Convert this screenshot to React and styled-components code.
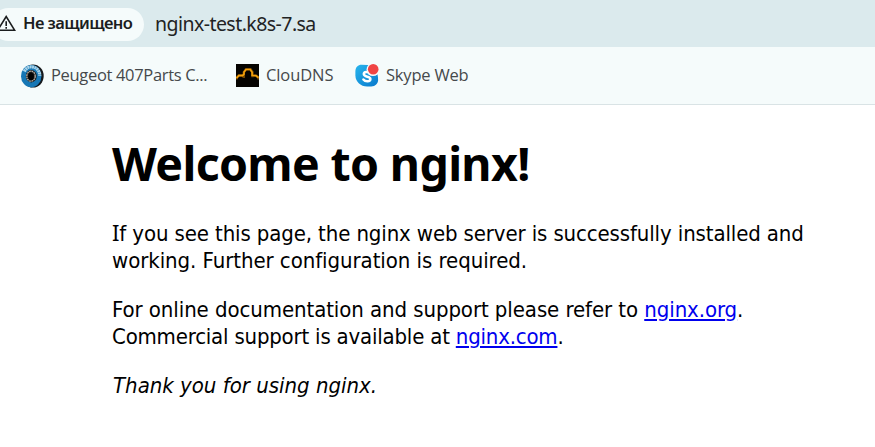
import React from 'react';
import styled, { createGlobalStyle } from 'styled-components';

const GlobalStyle = createGlobalStyle`
  * { box-sizing: border-box; }
  body { margin: 0; background: #fff; overflow: hidden; }
`;

const Browser = styled.div`
  width: 875px;
  height: 447px;
  overflow: hidden;
  background: #fff;
  font-family: 'Noto Sans', 'Open Sans', sans-serif;
`;

const AddressBar = styled.header`
  display: flex;
  align-items: center;
  height: 47px;
  background: #dbeaed;
`;

const SecurityChip = styled.div`
  display: flex;
  align-items: center;
  width: 152px;
  height: 33px;
  margin: 1px 0 0 -8px;
  padding-left: 8px;
  border-radius: 17px;
  background: #f5fbfb;
  color: #1b1d1e;
`;

const ChipLabel = styled.span`
  margin: -2px 0 0 7px;
  font-size: 16.5px;
  font-weight: 600;
  line-height: 24px;
  letter-spacing: ${(p) => p.$track}px;
  white-space: nowrap;
`;

const Url = styled.span`
  margin: 1px 0 0 11px;
  color: #1f2324;
  font-size: 19.5px;
  line-height: 28px;
  letter-spacing: ${(p) => p.$track}px;
  white-space: nowrap;
`;

const BookmarksBar = styled.nav`
  display: flex;
  align-items: center;
  height: 58px;
  padding-left: 20px;
  background: #f5fbfb;
  border-bottom: 1px solid #d9e3e5;
`;

const Bookmark = styled.div`
  display: flex;
  align-items: center;
  flex: none;
  width: ${(p) => p.$width}px;
  gap: 7px;
`;

const BookmarkLabel = styled.span`
  margin-top: -2px;
  color: #45494b;
  font-family: 'Open Sans', 'Noto Sans', sans-serif;
  font-size: 16.5px;
  line-height: 24px;
  letter-spacing: ${(p) => p.$track}px;
  white-space: nowrap;
`;

const Icon = styled.svg`
  display: block;
  flex: none;
`;

const Page = styled.main`
  padding: 29px 0 0 112px;
  color: #000;
  font-family: 'DejaVu Sans Condensed', 'DejaVu Sans', sans-serif;
  font-stretch: condensed;
`;

const Title = styled.h1`
  margin: 0 0 28px;
  font-family: 'Noto Sans', sans-serif;
  font-size: 46.5px;
  font-weight: 700;
  line-height: 58px;
  letter-spacing: ${(p) => p.$track}px;
  white-space: nowrap;
`;

const Paragraph = styled.p`
  margin: 0 0 22px;
  font-size: 22px;
  line-height: 27px;
  white-space: nowrap;
`;

const Line = styled.span`
  display: block;
  letter-spacing: ${(p) => p.$track}px;
`;

const ThanksLine = styled.em`
  display: block;
  padding-left: 1px;
`;

const SerifedCapital = styled.span`
  font-family: 'Noto Sans', sans-serif;
  line-height: 1;
`;

const Link = styled.a`
  color: #0000ee;
  text-decoration: underline;
  text-decoration-thickness: 2px;
  text-underline-offset: 2px;
`;

const WarningIcon = () => (
  <Icon width="16" height="18" viewBox="0 0 16 18">
    <path d="M-2.3 15.3 6.2 1.6 14.7 15.3Z" fill="none" stroke="#1b1d1e" strokeWidth="1.6" />
    <path d="M6.2 6.3v4.6M6.2 12v1.8" stroke="#1b1d1e" strokeWidth="1.6" />
  </Icon>
);

const PartsIcon = () => (
  <Icon width="24" height="24" viewBox="0 0 24 24">
    <ellipse cx="13" cy="12" rx="10.7" ry="11.6" fill="#15191c" />
    <ellipse cx="11.2" cy="12.2" rx="10.2" ry="11.2" fill="#1677b5" />
    <path d="M4.3 7.5C7 1.8 14 1.2 18 6c1.2 1.6 1.8 3.5 1.8 5.7" fill="none" stroke="#a9d3e9" strokeWidth="3.2" strokeDasharray="2 .4" />
    <ellipse cx="11.3" cy="12.2" rx="5.4" ry="6.2" fill="#151515" />
    <ellipse cx="11" cy="12.2" rx="4.2" ry="5" fill="#151515" stroke="#b8b2a8" strokeWidth="1.3" strokeDasharray="1.8 .6" />
    <ellipse cx="11" cy="12.4" rx="2.7" ry="3.5" fill="#030303" />
  </Icon>
);

const CloudIcon = () => (
  <Icon width="23" height="23" viewBox="0 0 23 23">
    <path d="M0 0h23v23H0Z" fill="#050300" />
    <path d="M.5 15.5v-2l2.5-2.2h3.5l1 1.2M7.8 14V8.3L10 5.2h4.5l2 3v5M16.5 11.8h3.8l2.2 2v1.7" fill="none" stroke="#704400" strokeWidth="2.5" />
    <path d="M.5 14.3 2.8 11.7h3.8L8 10.2V8l2-2.5h4.3l1.8 2.7v3.3h3.7l2.7 2.2" fill="none" stroke="#f4a00a" strokeWidth="1.7" />
  </Icon>
);

const SkypeIcon = () => (
  <Icon width="24" height="24" viewBox="0 0 24 24">
    <defs>
      <linearGradient id="skype" x1="0" y1="0" x2="1" y2="1">
        <stop offset="0" stopColor="#27b5ed" />
        <stop offset="1" stopColor="#0878cc" />
      </linearGradient>
    </defs>
    <path d="M6.5.8C3 .8.5 3.2.4 7v4.5c0 6 5 11 11.8 11h4c4 0 6.9-3 6.9-6.5 0-8-3-13.5-10.5-15Z" fill="url(#skype)" />
    <path d="M14.8 9.2C13 7.3 8.8 7.4 8.8 10c0 3.5 6.6 1.9 6.6 5 0 3-5 3.1-7 .5" fill="none" stroke="#fff" strokeWidth="2.5" strokeLinecap="round" />
    <circle cx="18" cy="5.6" r="6.5" fill="#f5fbfb" />
    <circle cx="18.2" cy="5.3" r="5.3" fill="#f04444" />
  </Icon>
);

export default function App() {
  return (
    <Browser>
      <GlobalStyle />
      <AddressBar>
        <SecurityChip>
          <WarningIcon />
          <ChipLabel $track={-0.6}>Не защищено</ChipLabel>
        </SecurityChip>
        <Url $track={-0.55}>nginx-test.k8s-7.sa</Url>
      </AddressBar>
      <BookmarksBar>
        <Bookmark $width={216}>
          <PartsIcon />
          <BookmarkLabel $track={-0.33}>Peugeot 407Parts C...</BookmarkLabel>
        </Bookmark>
        <Bookmark $width={119}>
          <CloudIcon />
          <BookmarkLabel $track={-0.1}>ClouDNS</BookmarkLabel>
        </Bookmark>
        <Bookmark $width={120}>
          <SkypeIcon />
          <BookmarkLabel $track={-0.2}>Skype Web</BookmarkLabel>
        </Bookmark>
      </BookmarksBar>
      <Page>
        <Title $track={-0.67}>Welcome to nginx!</Title>
        <Paragraph>
          <Line $track={-0.12}><SerifedCapital>I</SerifedCapital>f you see this page, the nginx web server is successfully installed and</Line>
          <Line $track={-0.06}>working. Further configuration is required.</Line>
        </Paragraph>
        <Paragraph>
          <Line $track={-0.08}>For online documentation and support please refer to <Link>nginx.org</Link>.</Line>
          <Line $track={-0.2}>Commercial support is available at <Link>nginx.com</Link>.</Line>
        </Paragraph>
        <Paragraph>
          <ThanksLine>Thank you for using nginx.</ThanksLine>
        </Paragraph>
      </Page>
    </Browser>
  );
}
